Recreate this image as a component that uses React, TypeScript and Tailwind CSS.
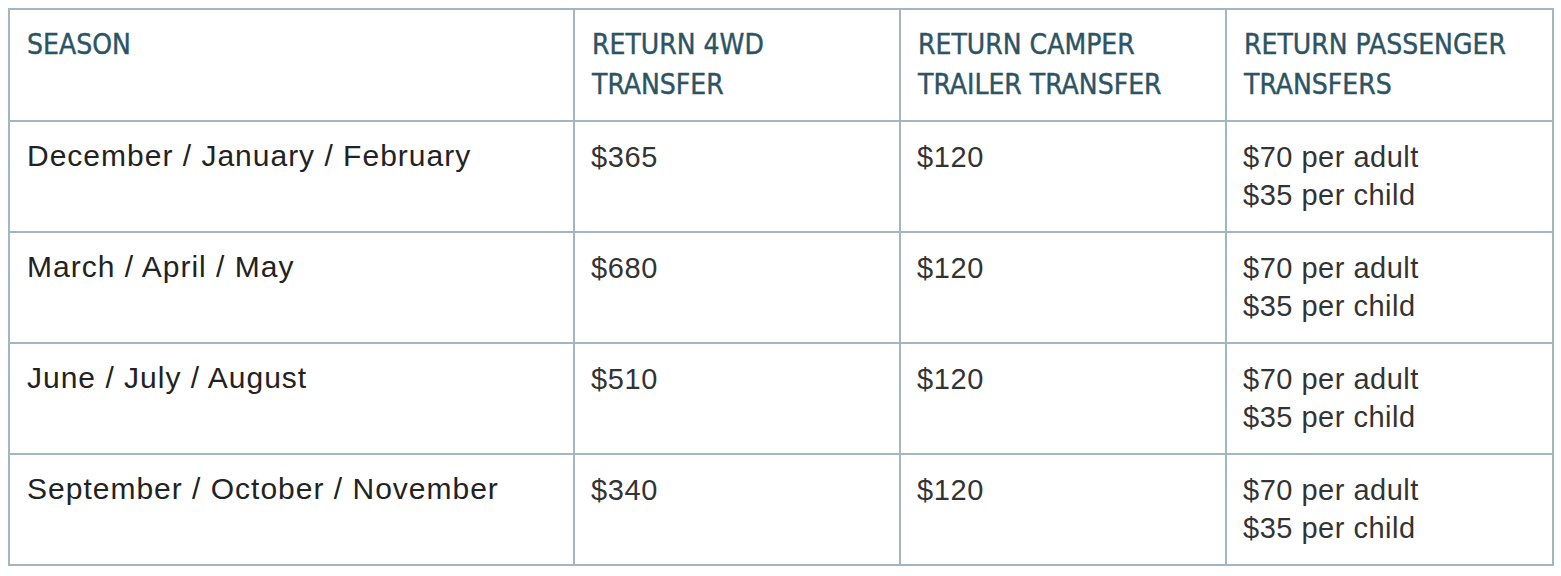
import React from "react";

const rows = [
  { season: "December / January / February", wd: "$365" },
  { season: "March / April / May", wd: "$680" },
  { season: "June / July / August", wd: "$510" },
  { season: "September / October / November", wd: "$340" },
];

const headFont = { fontFamily: '"DejaVu Sans Condensed", "Liberation Sans Narrow", "Liberation Sans", sans-serif' };
const bodyFont = { fontFamily: '"Liberation Sans", Arial, sans-serif' };

export default function App() {
  return (
    <div className="w-[1561px] h-[576px] bg-white pt-[8px] pl-[8px]">
      <table className="border-collapse table-fixed w-[1544px]">
        <colgroup>
          <col className="w-[565px]" />
          <col className="w-[326px]" />
          <col className="w-[326px]" />
          <col className="w-[327px]" />
        </colgroup>
        <thead>
          <tr className="h-[112px]">
            {["SEASON", "RETURN 4WD\nTRANSFER", "RETURN CAMPER\nTRAILER TRANSFER", "RETURN PASSENGER\nTRANSFERS"].map((h) => (
              <th
                key={h}
                style={headFont}
                className="border-2 border-[#a3b5be] align-top text-left font-normal text-[#2c5464] text-[28px] leading-[40px] pl-[17px] pt-[15px] whitespace-pre-line [-webkit-text-stroke:0.4px_#2c5464]"
              >
                {h}
              </th>
            ))}
          </tr>
        </thead>
        <tbody>
          {rows.map((r) => (
            <tr key={r.season} className="h-[111px]">
              <td style={bodyFont} className="border-2 border-[#a3b5be] align-top text-[#222] text-[30px] tracking-[1px] leading-[38px] pl-[17px] pt-[15px]">
                {r.season}
              </td>
              <td style={bodyFont} className="border-2 border-[#a3b5be] align-top text-[#333] text-[29px] tracking-[0.6px] leading-[38px] pl-[16px] pt-[16px]">
                {r.wd}
              </td>
              <td style={bodyFont} className="border-2 border-[#a3b5be] align-top text-[#333] text-[29px] tracking-[0.6px] leading-[38px] pl-[16px] pt-[16px]">
                $120
              </td>
              <td style={bodyFont} className="border-2 border-[#a3b5be] align-top text-[#333] text-[29px] tracking-[0.5px] leading-[38px] pl-[16px] pt-[16px]">
                $70 per adult
                <br />
                $35 per child
              </td>
            </tr>
          ))}
        </tbody>
      </table>
    </div>
  );
}
